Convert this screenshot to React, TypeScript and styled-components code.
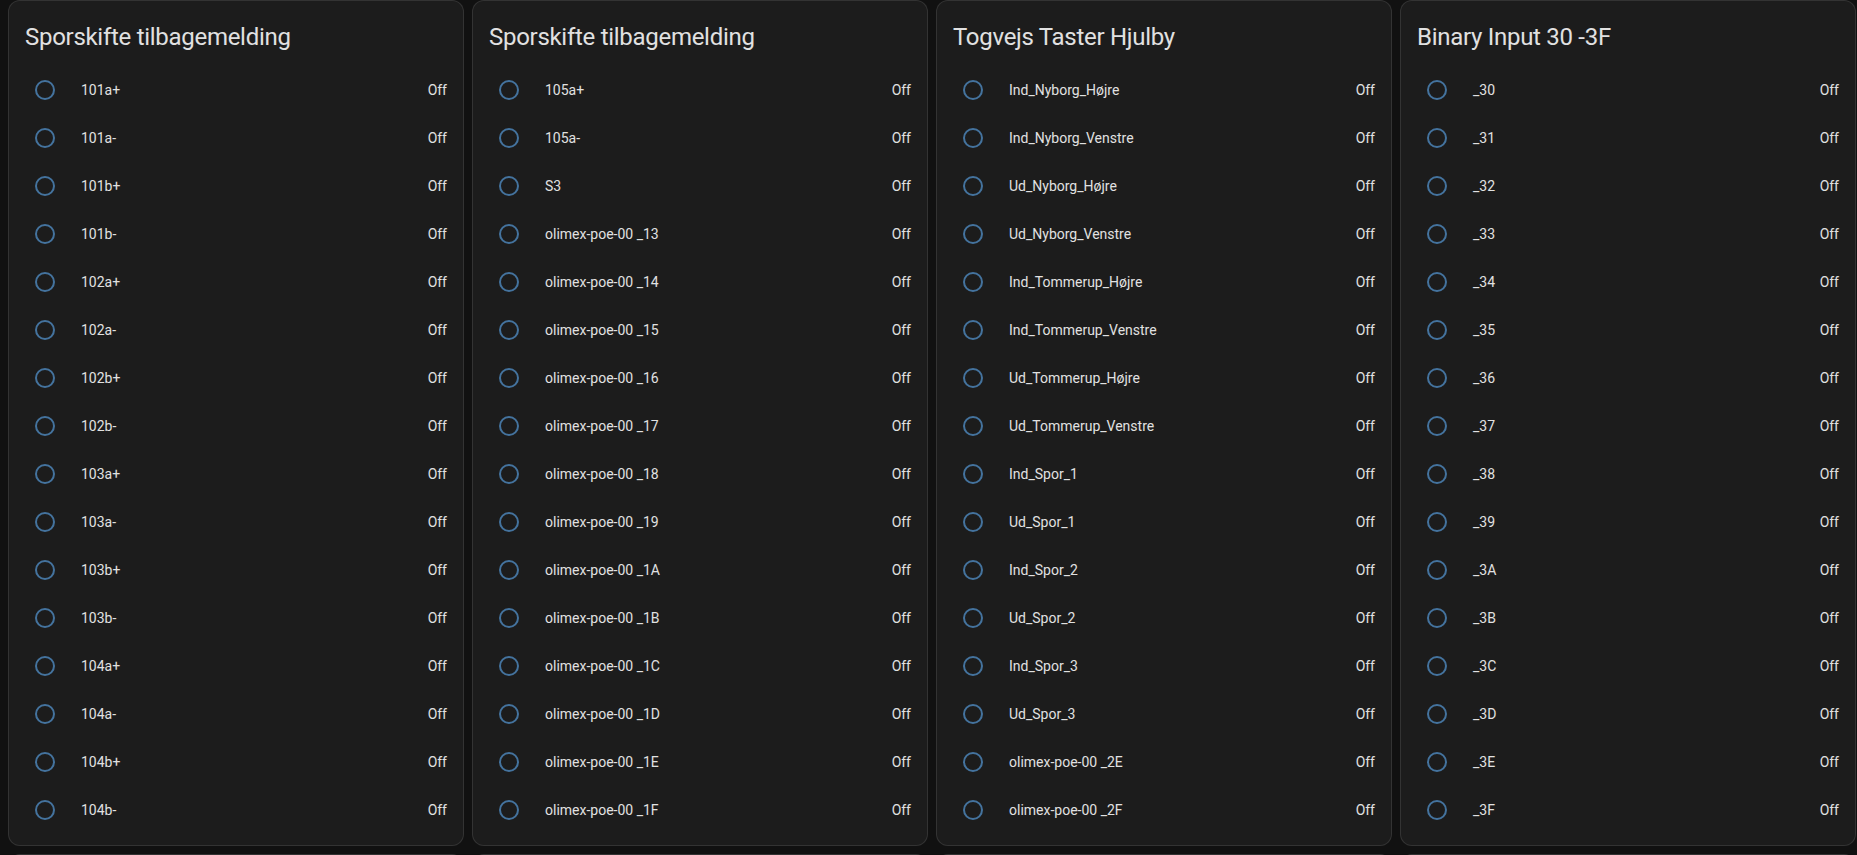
import React from "react";
import styled, { createGlobalStyle } from "styled-components";

const Global = createGlobalStyle`
  html, body { margin: 0; padding: 0; background: #111111; }
  body { font-family: Roboto, "Noto Sans", sans-serif; color: #e1e1e1; overflow: hidden; }
`;

const Page = styled.div`
  display: grid;
  grid-template-columns: repeat(4, 456px);
  column-gap: 8px;
  row-gap: 8px;
  padding: 0 1px 0 8px;
  align-items: start;
`;

const Card = styled.section`
  box-sizing: border-box;
  background: #1c1c1c;
  border: 1px solid rgba(225, 225, 225, 0.12);
  border-radius: 12px;
  min-height: ${(p: { $min?: number }) => (p.$min ? `${p.$min}px` : "0")};
`;

const Header = styled.h1`
  margin: 0;
  padding: 12px 16px 0;
  font-size: 24px;
  font-weight: 400;
  line-height: 48px;
  letter-spacing: -0.012em;
  color: #e1e1e1;
`;

const List = styled.div`
  display: flex;
  flex-direction: column;
  gap: 8px;
  padding: 8.5px 16px 15px;
`;

const Row = styled.div`
  display: flex;
  align-items: center;
  height: 40px;
`;

const Badge = styled.div`
  width: 40px;
  height: 40px;
  display: flex;
  align-items: center;
  justify-content: center;
  flex: none;
  color: #44739e;
`;

const Name = styled.div`
  flex: 1;
  margin-left: 16px;
  font-size: 14px;
  line-height: 20px;
  color: #e1e1e1;
  white-space: nowrap;
`;

const State = styled.div`
  font-size: 14px;
  line-height: 20px;
  color: #e1e1e1;
  text-align: right;
`;

const RadioIcon = () => (
  <svg width="24" height="24" viewBox="0 0 24 24" fill="currentColor">
    <path d="M12,20A8,8 0 0,1 4,12A8,8 0 0,1 12,4A8,8 0 0,1 20,12A8,8 0 0,1 12,20M12,2A10,10 0 0,0 2,12A10,10 0 0,0 12,22A10,10 0 0,0 22,12A10,10 0 0,0 12,2Z" />
  </svg>
);

const cards: { title: string; items: string[] }[] = [
  {
    title: "Sporskifte tilbagemelding",
    items: [
      "101a+", "101a-", "101b+", "101b-", "102a+", "102a-", "102b+", "102b-",
      "103a+", "103a-", "103b+", "103b-", "104a+", "104a-", "104b+", "104b-",
    ],
  },
  {
    title: "Sporskifte tilbagemelding",
    items: [
      "105a+", "105a-", "S3",
      ...["13", "14", "15", "16", "17", "18", "19", "1A", "1B", "1C", "1D", "1E", "1F"].map(
        (s) => `olimex-poe-00 _${s}`
      ),
    ],
  },
  {
    title: "Togvejs Taster Hjulby",
    items: [
      "Ind_Nyborg_Højre", "Ind_Nyborg_Venstre", "Ud_Nyborg_Højre", "Ud_Nyborg_Venstre",
      "Ind_Tommerup_Højre", "Ind_Tommerup_Venstre", "Ud_Tommerup_Højre", "Ud_Tommerup_Venstre",
      "Ind_Spor_1", "Ud_Spor_1", "Ind_Spor_2", "Ud_Spor_2", "Ind_Spor_3", "Ud_Spor_3",
      "olimex-poe-00 _2E", "olimex-poe-00 _2F",
    ],
  },
  {
    title: "Binary Input 30 -3F",
    items: ["0", "1", "2", "3", "4", "5", "6", "7", "8", "9", "A", "B", "C", "D", "E", "F"].map(
      (s) => `_3${s}`
    ),
  },
];

export default function App() {
  return (
    <>
      <Global />
      <Page>
        {cards.map((c, i) => (
          <Card key={i}>
            <Header>{c.title}</Header>
            <List>
              {c.items.map((it) => (
                <Row key={it}>
                  <Badge>
                    <RadioIcon />
                  </Badge>
                  <Name>{it}</Name>
                  <State>Off</State>
                </Row>
              ))}
            </List>
          </Card>
        ))}
        {[0, 1, 2, 3].map((i) => (
          <Card key={`b${i}`} $min={200} />
        ))}
      </Page>
    </>
  );
}
